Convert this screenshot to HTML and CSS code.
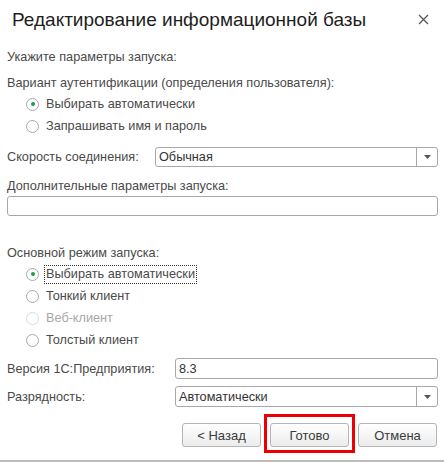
FILE: index.html
```html
<!DOCTYPE html>
<html lang="ru">
<head>
<meta charset="utf-8">
<title>Редактирование информационной базы</title>
<link rel="stylesheet" href="styles.css">
</head>
<body>
<div class="dialog">
  <div class="header">
    <div class="title">Редактирование информационной базы</div>
    <div class="close">
      <svg width="11" height="11" viewBox="0 0 11 11"><path d="M1 1L10 10M10 1L1 10" stroke="#555" stroke-width="1.3" fill="none"/></svg>
    </div>
  </div>
  <div class="content">
    <div class="line l1">Укажите параметры запуска:</div>
    <div class="line l2">Вариант аутентификации (определения пользователя):</div>
    <div class="radios">
      <div class="radio checked"><span class="circle"></span><span class="rtext">Выбирать автоматически</span></div>
      <div class="radio"><span class="circle"></span><span class="rtext">Запрашивать имя и пароль</span></div>
    </div>
    <div class="field speed">
      <div class="flabel wl">Скорость соединения:</div>
      <div class="box select"><span class="val">Обычная</span><span class="arrow"><svg width="7" height="4" viewBox="0 0 7 4"><path d="M0 0H7L3.5 4Z" fill="#555"/></svg></span></div>
    </div>
    <div class="line l3">Дополнительные параметры запуска:</div>
    <div class="box wide"></div>
    <div class="line l4">Основной режим запуска:</div>
    <div class="radios">
      <div class="radio checked"><span class="circle"></span><span class="rtext focus">Выбирать автоматически</span></div>
      <div class="radio"><span class="circle"></span><span class="rtext">Тонкий клиент</span></div>
      <div class="radio disabled"><span class="circle"></span><span class="rtext">Веб-клиент</span></div>
      <div class="radio"><span class="circle"></span><span class="rtext">Толстый клиент</span></div>
    </div>
    <div class="field ver">
      <div class="flabel wv">Версия 1С:Предприятия:</div>
      <div class="box"><span class="val">8.3</span></div>
    </div>
    <div class="field bits">
      <div class="flabel wv">Разрядность:</div>
      <div class="box select"><span class="val">Автоматически</span><span class="arrow"><svg width="7" height="4" viewBox="0 0 7 4"><path d="M0 0H7L3.5 4Z" fill="#555"/></svg></span></div>
    </div>
    <div class="buttons">
      <div class="btn">&lt; Назад</div>
      <div class="btn primary">Готово<span class="mark"></span></div>
      <div class="btn">Отмена</div>
    </div>
  </div>
</div>
</body>
</html>
```
FILE: styles.css
```css
html, body {
  margin: 0;
  padding: 0;
  background: #fff;
}
body {
  font-family: "Liberation Sans", Arial, sans-serif;
  font-size: 12.7px;
  color: #4a4a4a;
}
.dialog {
  width: 444px;
  height: 462px;
  box-sizing: border-box;
  border-bottom: 2px solid #bdbdbd;
  overflow: hidden;
}
.header {
  height: 40px;
  display: flex;
  align-items: center;
  justify-content: space-between;
  padding: 0 15px 0 12px;
}
.title {
  font-size: 19px;
  color: #1e1e1e;
  line-height: 24px;
}
.close {
  display: flex;
  align-items: center;
  margin-top: -2px;
}
.content {
  padding: 0 6px 0 7px;
}
.line {
  line-height: 20px;
  height: 20px;
}
.l1 { margin-top: 7px; }
.l2 { margin-top: 6px; }
.l3 { margin-top: 9px; }
.l4 { margin-top: 27px; }
.radios {
  padding-left: 19px;
}
.radio {
  height: 22px;
  display: flex;
  align-items: center;
}
.circle {
  width: 11px;
  height: 11px;
  border: 1px solid #a9a9a9;
  border-radius: 50%;
  box-sizing: content-box;
  background: #fff;
  position: relative;
  flex: none;
}
.checked .circle::after {
  content: "";
  position: absolute;
  left: 3.5px;
  top: 3.5px;
  width: 4px;
  height: 4px;
  border-radius: 50%;
  background: #1f9a4c;
}
.disabled .circle {
  border-color: #dcdcdc;
}
.disabled .rtext {
  color: #a8a8a8;
}
.rtext {
  line-height: 17px;
  padding: 0 1px;
  border: 1px dotted transparent;
  margin-left: 5px;
}
.rtext.focus {
  border-color: #333;
}
.field {
  display: flex;
  align-items: center;
}
.speed { margin-top: 10px; }
.ver { margin-top: 7px; }
.bits { margin-top: 7px; }
.flabel {
  flex: none;
}
.wl { width: 148px; }
.wv { width: 168px; }
.box {
  flex: 1;
  height: 21px;
  box-sizing: border-box;
  border: 1px solid #a8a8a8;
  border-radius: 3px;
  display: flex;
  align-items: center;
  color: #333;
  background: #fff;
}
.speed .box { height: 20px; }
.box .val {
  flex: 1;
  padding-left: 3px;
}
.box .arrow {
  width: 20px;
  align-self: stretch;
  border-left: 1px solid #a8a8a8;
  display: flex;
  align-items: center;
  justify-content: center;
}
.wide {
  height: 20px;
  width: 431px;
  flex: none;
}
.buttons {
  display: flex;
  justify-content: flex-end;
  gap: 9px;
  margin-top: 16px;
  padding-right: 1px;
}
.btn {
  width: 79px;
  height: 24px;
  box-sizing: border-box;
  border: 1px solid #b5b5b5;
  border-radius: 3px;
  background: linear-gradient(#ffffff, #ececec);
  display: flex;
  align-items: center;
  justify-content: center;
  color: #3a3a3a;
  font-size: 13px;
  position: relative;
}
.mark {
  position: absolute;
  left: -7px;
  right: -7px;
  top: -10px;
  bottom: -7px;
  border: 3.5px solid #ee0000;
  box-sizing: border-box;
  pointer-events: none;
}
```
